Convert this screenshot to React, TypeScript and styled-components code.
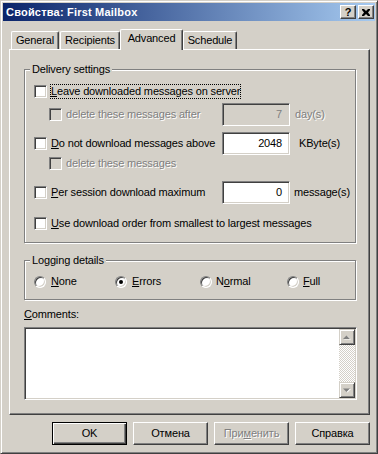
import React from "react";
import styled, { createGlobalStyle, css } from "styled-components";

const FACE = "#d4d0c8";
const SHADOW = "#808080";
const DARK = "#404040";
const HI = "#ffffff";

const Global = createGlobalStyle`
  html, body { margin: 0; padding: 0; background: ${FACE}; }
  body {
    font-family: "Liberation Sans", Arial, sans-serif;
    font-size: 11px;
    letter-spacing: -0.15px;
    color: #000;
  }
  * { box-sizing: border-box; }
`;

const Window = styled.div`
  width: 378px;
  height: 454px;
  background: ${FACE};
  border: 1px solid;
  border-color: ${FACE} ${DARK} ${DARK} ${FACE};
  box-shadow: inset 1px 1px 0 ${HI}, inset -1px -1px 0 ${SHADOW};
  padding: 2px;
  display: flex;
  flex-direction: column;
`;

const TitleBar = styled.div`
  height: 18px;
  background: linear-gradient(to right, #0a246a, #a6caf0);
  display: flex;
  align-items: center;
  padding: 0 1px 0 3px;
`;

const TitleText = styled.div`
  flex: 1;
  color: #fff;
  font-weight: bold;
  font-size: 11px;
  letter-spacing: 0.2px;
  line-height: 13px;
  white-space: nowrap;
`;

const CaptionButton = styled.div<{ $ml?: number }>`
  width: 16px;
  height: 14px;
  margin-left: ${(p) => p.$ml ?? 0}px;
  background: ${FACE};
  border: 1px solid;
  border-color: ${HI} ${DARK} ${DARK} ${HI};
  box-shadow: inset -1px -1px 0 ${SHADOW};
  display: flex;
  align-items: center;
  justify-content: center;
  font-weight: bold;
  font-size: 11px;
  line-height: 11px;
  letter-spacing: 0;
  color: #000;
`;

const Body = styled.div`
  flex: 1;
  display: flex;
  flex-direction: column;
  padding: 8px 5px 0 6px;
`;

const TabStrip = styled.div`
  display: flex;
  align-items: flex-end;
  height: 21px;
  padding-left: 2px;
  margin-bottom: -1px;
  position: relative;
  z-index: 1;
`;

const Tab = styled.div<{ $active?: boolean; $w: number; $mr?: number }>`
  width: ${(p) => p.$w}px;
  height: ${(p) => (p.$active ? 21 : 18)}px;
  margin-bottom: ${(p) => (p.$active ? 0 : 1)}px;
  margin-right: ${(p) => p.$mr ?? 0}px;
  background: ${FACE};
  border-left: 1px solid ${HI};
  border-top: 1px solid ${HI};
  border-right: 1px solid ${DARK};
  box-shadow: inset -1px 0 0 ${SHADOW};
  border-top-left-radius: 2px;
  border-top-right-radius: 2px;
  display: flex;
  justify-content: center;
  padding-top: 2px;
  line-height: 13px;
  white-space: nowrap;
`;

const Panel = styled.div`
  height: 366px;
  border-left: 1px solid ${HI};
  border-top: 1px solid ${HI};
  border-right: 1px solid ${DARK};
  border-bottom: 1px solid ${DARK};
  box-shadow: inset -1px -1px 0 ${SHADOW};
  padding: 19px 13px 0 14px;
  display: flex;
  flex-direction: column;
`;

const Group = styled.div<{ $h: number; $mt?: number }>`
  position: relative;
  height: ${(p) => p.$h}px;
  margin-top: ${(p) => p.$mt ?? 0}px;
  border: 1px solid ${SHADOW};
  box-shadow: 1px 1px 0 ${HI}, inset 1px 1px 0 ${HI};
  display: flex;
  flex-direction: column;
`;

const Legend = styled.div`
  position: absolute;
  top: -7px;
  left: 5px;
  padding: 0 2px;
  background: ${FACE};
  line-height: 13px;
  white-space: nowrap;
`;

const Row = styled.div<{ $mt: number; $h: number; $indent: number }>`
  display: flex;
  align-items: center;
  margin-top: ${(p) => p.$mt}px;
  height: ${(p) => p.$h}px;
  padding-left: ${(p) => p.$indent}px;
`;

const CheckItem = styled.div<{ $w?: number }>`
  display: flex;
  align-items: center;
  ${(p) => (p.$w ? css`width: ${p.$w}px;` : "")}
  flex-shrink: 0;
`;

const CheckBox = styled.span<{ $disabled?: boolean }>`
  width: 13px;
  height: 13px;
  flex-shrink: 0;
  border: 1px solid;
  border-color: ${SHADOW} ${HI} ${HI} ${SHADOW};
  box-shadow: inset 1px 1px 0 ${DARK}, inset -1px -1px 0 ${FACE};
  background: ${(p) => (p.$disabled ? FACE : HI)};
`;

const Label = styled.span<{ $disabled?: boolean; $focus?: boolean; $ml?: number }>`
  margin-left: ${(p) => p.$ml ?? 3}px;
  padding: 1px 1px;
  line-height: 13px;
  white-space: nowrap;
  ${(p) =>
    p.$disabled &&
    css`
      color: ${SHADOW};
      text-shadow: 1px 1px 0 ${HI};
    `}
  ${(p) =>
    p.$focus &&
    css`
      outline: 1px dotted #000;
      outline-offset: -1px;
    `}
`;

const Key = styled.span`
  text-decoration: underline;
`;

const Edit = styled.div<{ $disabled?: boolean }>`
  width: 68px;
  height: 23px;
  flex-shrink: 0;
  border: 1px solid;
  border-color: ${SHADOW} ${HI} ${HI} ${SHADOW};
  box-shadow: inset 1px 1px 0 ${DARK}, inset -1px -1px 0 ${FACE};
  background: ${(p) => (p.$disabled ? FACE : HI)};
  color: ${(p) => (p.$disabled ? SHADOW : "#000")};
  display: flex;
  align-items: center;
  justify-content: flex-end;
  padding-right: 7px;
  line-height: 13px;
`;

const Unit = styled.span<{ $ml: number; $disabled?: boolean }>`
  margin-left: ${(p) => p.$ml}px;
  white-space: nowrap;
  line-height: 13px;
  ${(p) =>
    p.$disabled &&
    css`
      color: ${SHADOW};
      text-shadow: 1px 1px 0 ${HI};
    `}
`;

const RadioRow = styled.div`
  display: grid;
  grid-template-columns: 81px 85px 87px auto;
  align-items: center;
  margin-top: 13px;
  height: 15px;
  padding-left: 9px;
`;

const RadioItem = styled.div`
  display: flex;
  align-items: center;
`;

const Radio = styled.span<{ $checked?: boolean }>`
  position: relative;
  width: 12px;
  height: 12px;
  flex-shrink: 0;
  border-radius: 50%;
  border: 1px solid;
  border-color: ${SHADOW} ${HI} ${HI} ${SHADOW};
  box-shadow: inset 1px 1px 0 ${DARK}, inset -1px -1px 0 ${FACE};
  background: ${HI};
  ${(p) =>
    p.$checked &&
    css`
      &::after {
        content: "";
        position: absolute;
        left: 3px;
        top: 3px;
        width: 4px;
        height: 4px;
        border-radius: 50%;
        background: #000;
      }
    `}
`;

const CommentsLabel = styled.div`
  margin-top: 8px;
  line-height: 13px;
`;

const TextBox = styled.div`
  margin-top: 6px;
  margin-right: -1px;
  height: 73px;
  border: 1px solid;
  border-color: ${SHADOW} ${HI} ${HI} ${SHADOW};
  box-shadow: inset 1px 1px 0 ${DARK}, inset -1px -1px 0 ${FACE};
  background: ${HI};
  padding: 1px;
  display: flex;
  justify-content: flex-end;
`;

const ScrollBar = styled.div`
  width: 16px;
  display: flex;
  flex-direction: column;
`;

const ScrollButton = styled.div`
  width: 16px;
  height: 16px;
  background: ${FACE};
  border: 1px solid;
  border-color: ${FACE} ${DARK} ${DARK} ${FACE};
  box-shadow: inset 1px 1px 0 ${HI}, inset -1px -1px 0 ${SHADOW};
  display: flex;
  align-items: center;
  justify-content: center;
`;

const Track = styled.div`
  flex: 1;
  background-color: ${FACE};
  background-image: conic-gradient(${HI} 25%, ${FACE} 0 50%, ${HI} 0 75%, ${FACE} 0);
  background-size: 2px 2px;
`;

const ButtonRow = styled.div`
  display: flex;
  justify-content: flex-end;
  gap: 6px;
  margin-top: 7px;
`;

const Button = styled.div<{ $default?: boolean; $disabled?: boolean }>`
  width: 75px;
  height: 23px;
  background: ${FACE};
  display: flex;
  align-items: center;
  justify-content: center;
  line-height: 13px;
  ${(p) =>
    p.$default
      ? css`
          border: 1px solid #000;
          box-shadow: inset 1px 1px 0 ${HI}, inset -1px -1px 0 ${DARK},
            inset -2px -2px 0 ${SHADOW};
        `
      : css`
          border: 1px solid;
          border-color: ${HI} ${DARK} ${DARK} ${HI};
          box-shadow: inset -1px -1px 0 ${SHADOW};
        `}
  ${(p) =>
    p.$disabled &&
    css`
      color: ${SHADOW};
      text-shadow: 1px 1px 0 ${HI};
    `}
`;

const CloseGlyph = () => (
  <svg width="8" height="7" viewBox="0 0 8 7">
    <path d="M0 0h2l2 2 2-2h2v1L6 3.5 8 6v1H6L4 5 2 7H0V6l2-2.5L0 1z" fill="#000" />
  </svg>
);

const Arrow = ({ up }: { up?: boolean }) => (
  <svg width="8" height="5" viewBox="0 0 8 5">
    {up ? (
      <>
        <path d="M1 4.5h7L4.5 1z" fill={HI} />
        <path d="M0 4h7L3.5 0.5z" fill={SHADOW} />
      </>
    ) : (
      <>
        <path d="M1 1h7L4.5 4.5z" fill={HI} />
        <path d="M0 0.5h7L3.5 4z" fill={SHADOW} />
      </>
    )}
  </svg>
);

export default function App() {
  return (
    <>
      <Global />
      <Window>
        <TitleBar>
          <TitleText>Свойства: First Mailbox</TitleText>
          <CaptionButton>?</CaptionButton>
          <CaptionButton $ml={2}>
            <CloseGlyph />
          </CaptionButton>
        </TitleBar>
        <Body>
          <TabStrip>
            <Tab $w={48} $mr={1}>General</Tab>
            <Tab $w={60}>Recipients</Tab>
            <Tab $w={63} $active>
              Advanced
            </Tab>
            <Tab $w={54}>Schedule</Tab>
          </TabStrip>
          <Panel>
            <Group $h={174}>
              <Legend>Delivery settings</Legend>
              <Row $mt={14} $h={15} $indent={9}>
                <CheckItem>
                  <CheckBox />
                  <Label $focus>
                    <Key>L</Key>eave downloaded messages on server
                  </Label>
                </CheckItem>
              </Row>
              <Row $mt={4} $h={23} $indent={24}>
                <CheckItem $w={173}>
                  <CheckBox $disabled />
                  <Label $disabled>delete these messages after</Label>
                </CheckItem>
                <Edit $disabled>7</Edit>
                <Unit $ml={5} $disabled>
                  day(s)
                </Unit>
              </Row>
              <Row $mt={6} $h={23} $indent={9}>
                <CheckItem $w={188}>
                  <CheckBox />
                  <Label>
                    <Key>D</Key>o not download messages above
                  </Label>
                </CheckItem>
                <Edit>2048</Edit>
                <Unit $ml={9}>KByte(s)</Unit>
              </Row>
              <Row $mt={2} $h={13} $indent={24}>
                <CheckItem>
                  <CheckBox $disabled />
                  <Label $disabled>delete these messages</Label>
                </CheckItem>
              </Row>
              <Row $mt={11} $h={23} $indent={9}>
                <CheckItem $w={188}>
                  <CheckBox />
                  <Label>
                    <Key>P</Key>er session download maximum
                  </Label>
                </CheckItem>
                <Edit>0</Edit>
                <Unit $ml={4}>message(s)</Unit>
              </Row>
              <Row $mt={13} $h={13} $indent={9}>
                <CheckItem>
                  <CheckBox />
                  <Label>
                    <Key>U</Key>se download order from smallest to largest messages
                  </Label>
                </CheckItem>
              </Row>
            </Group>
            <Group $h={40} $mt={17}>
              <Legend>Logging details</Legend>
              <RadioRow>
                <RadioItem>
                  <Radio />
                  <Label $ml={4}>
                    <Key>N</Key>one
                  </Label>
                </RadioItem>
                <RadioItem>
                  <Radio $checked />
                  <Label $ml={4}>
                    <Key>E</Key>rrors
                  </Label>
                </RadioItem>
                <RadioItem>
                  <Radio />
                  <Label $ml={3}>
                    N<Key>o</Key>rmal
                  </Label>
                </RadioItem>
                <RadioItem>
                  <Radio />
                  <Label $ml={3}>
                    <Key>F</Key>ull
                  </Label>
                </RadioItem>
              </RadioRow>
            </Group>
            <CommentsLabel>
              <Key>C</Key>omments:
            </CommentsLabel>
            <TextBox>
              <ScrollBar>
                <ScrollButton>
                  <Arrow up />
                </ScrollButton>
                <Track />
                <ScrollButton>
                  <Arrow />
                </ScrollButton>
              </ScrollBar>
            </TextBox>
          </Panel>
          <ButtonRow>
            <Button $default>OK</Button>
            <Button>Отмена</Button>
            <Button $disabled>
              При<Key>м</Key>енить
            </Button>
            <Button>Справка</Button>
          </ButtonRow>
        </Body>
      </Window>
    </>
  );
}
